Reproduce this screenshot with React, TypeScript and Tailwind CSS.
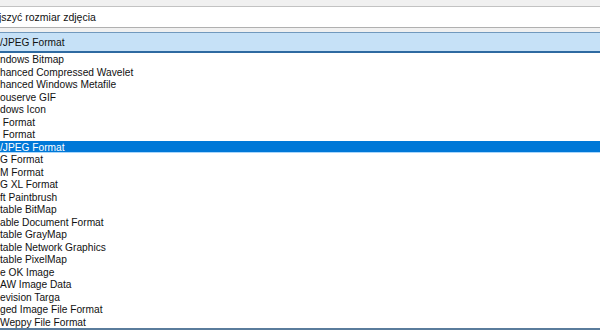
const rows = [
  "ndows Bitmap",
  "hanced Compressed Wavelet",
  "hanced Windows Metafile",
  "ouserve GIF",
  "dows Icon",
  " Format",
  " Format",
  "/JPEG Format",
  "G Format",
  "M Format",
  "G XL Format",
  "ft Paintbrush",
  "table BitMap",
  "able Document Format",
  "table GrayMap",
  "table Network Graphics",
  "table PixelMap",
  "e OK Image",
  "AW Image Data",
  "evision Targa",
  "ged Image File Format",
  "Weppy File Format",
]

export default function App() {
  const selected = 7
  return (
    <div className="w-[600px] h-[330px] overflow-hidden bg-[#f0f0f0] text-[10.2px] text-[#111] font-['Liberation_Sans',Arial,sans-serif]">
      <div className="h-[7px] border-b border-[#c2c2c2]" />
      <div className="h-[21px] bg-white border-b border-[#b0b0b0] flex items-center pt-[1px]">
        <span className="-ml-[1px] text-[10.5px]">jszyć rozmiar zdjęcia</span>
      </div>
      <div className="h-[4px]" />
      <div className="h-[21px] bg-[#c6e1f7] border-t border-[#7199bd] border-b-2 border-b-[#2e6aa1] flex items-center pt-[2px]">
        <span>/JPEG Format</span>
      </div>
      <div className="h-[275px] bg-white flex flex-col">
        {rows.map((r, i) => (
          <div
            key={i}
            className={`h-[12.5px] leading-[14px] whitespace-pre overflow-visible ${
              i === selected ? "bg-[#0078d7] text-white border-b border-[#a9d6fb]" : ""
            }`}
          >
            {r}
          </div>
        ))}
      </div>
      <div className="h-[2px] bg-[#5a7c9c]" />
    </div>
  )
}
